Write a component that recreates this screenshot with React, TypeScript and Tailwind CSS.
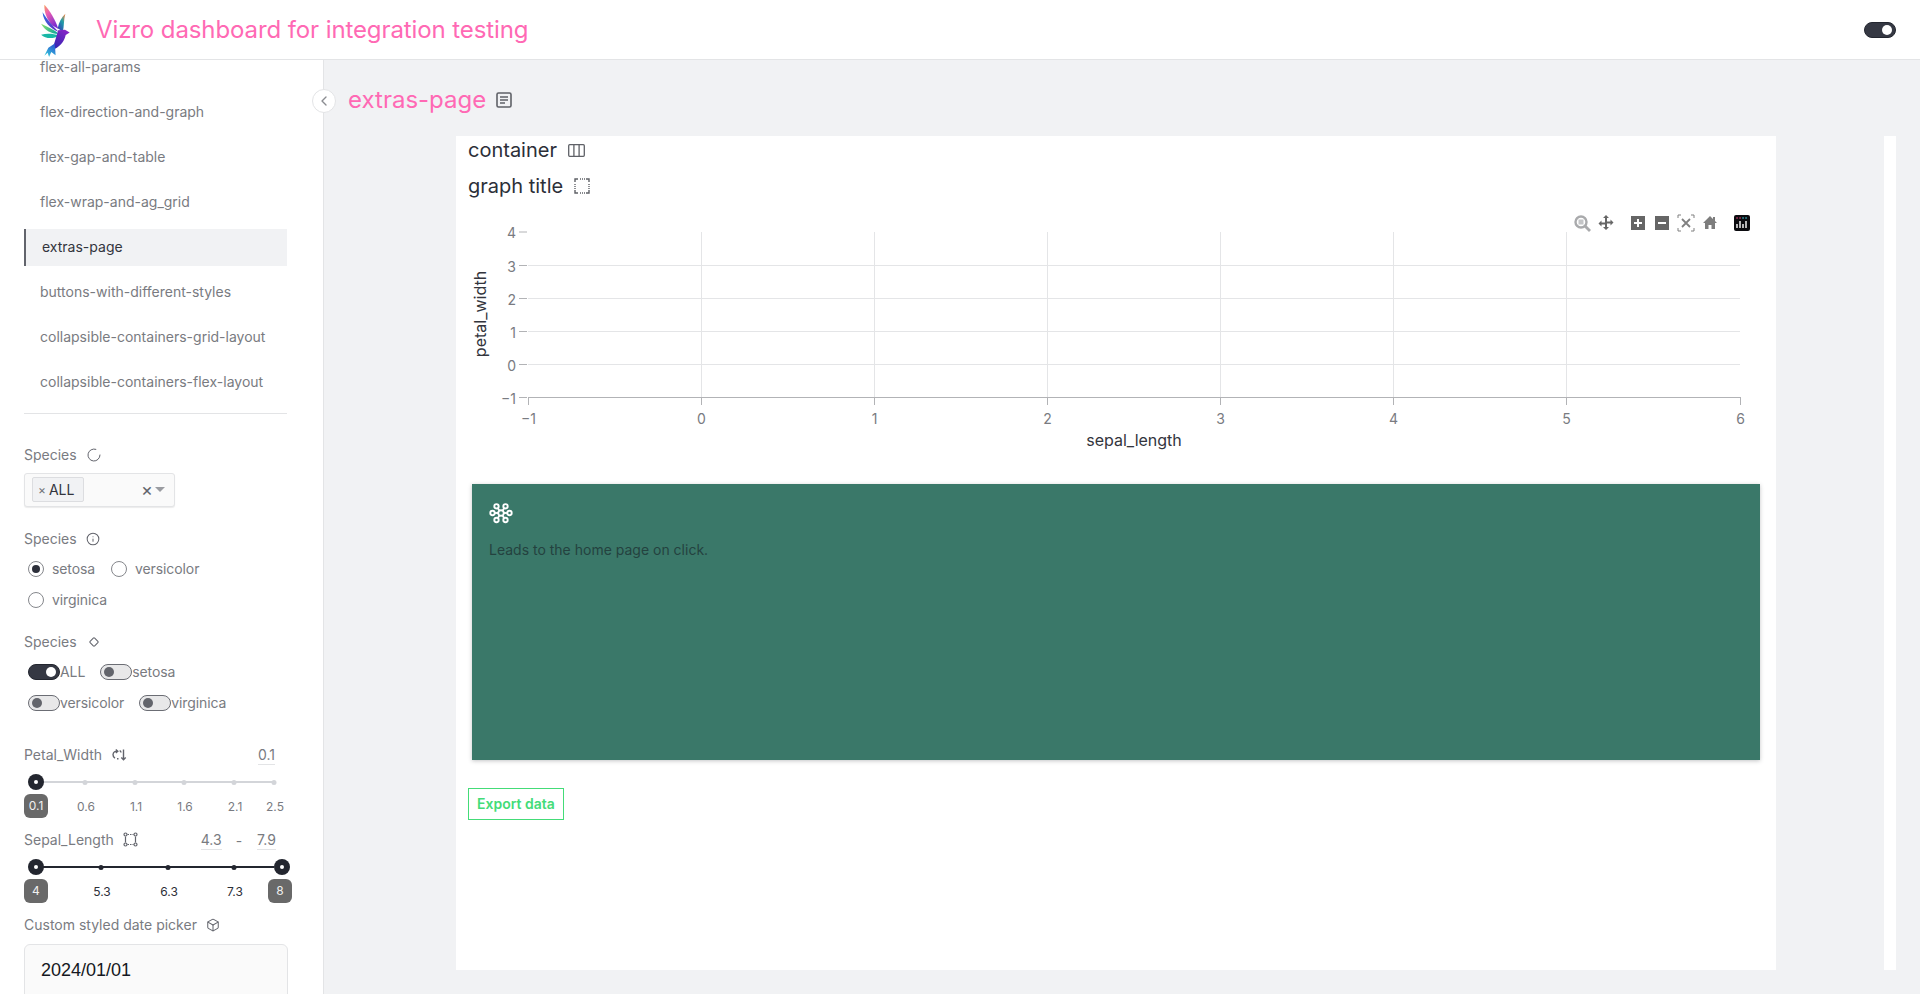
import { Box, ChevronLeft, Diamond, Info, LoaderCircle } from "lucide-react";
import type { ReactNode } from "react";

const pages = [
  "flex-all-params",
  "flex-direction-and-graph",
  "flex-gap-and-table",
  "flex-wrap-and-ag_grid",
  "extras-page",
  "buttons-with-different-styles",
  "collapsible-containers-grid-layout",
  "collapsible-containers-flex-layout",
];

function Logo() {
  return (
    <svg width="47" height="58" viewBox="10 5 130 160" className="shrink-0">
      <defs>
        <linearGradient id="wingA" x1="0" y1="0" x2="0.6" y2="1">
          <stop offset="0" stopColor="#f7a35c" />
          <stop offset="0.35" stopColor="#ef5fb0" />
          <stop offset="1" stopColor="#7a2bd0" />
        </linearGradient>
        <linearGradient id="wingB" x1="0" y1="0" x2="1" y2="1">
          <stop offset="0" stopColor="#2f6fe0" />
          <stop offset="1" stopColor="#6a25c4" />
        </linearGradient>
        <linearGradient id="wingC" x1="0" y1="0" x2="1" y2="0.5">
          <stop offset="0" stopColor="#8fe36a" />
          <stop offset="1" stopColor="#15a79a" />
        </linearGradient>
        <linearGradient id="wingR" x1="0.8" y1="0" x2="0.2" y2="1">
          <stop offset="0" stopColor="#e0884a" />
          <stop offset="0.4" stopColor="#1f9fa8" />
          <stop offset="1" stopColor="#3538b8" />
        </linearGradient>
        <linearGradient id="body" x1="0.8" y1="0" x2="0.2" y2="1">
          <stop offset="0" stopColor="#8a24c8" />
          <stop offset="1" stopColor="#2a25b0" />
        </linearGradient>
        <linearGradient id="tail" x1="0.7" y1="0" x2="0.2" y2="1">
          <stop offset="0" stopColor="#2a55d0" />
          <stop offset="1" stopColor="#35d0dc" />
        </linearGradient>
      </defs>
      <path d="M47 15C62 30 76 55 86 82L68 72C54 55 46 36 47 15Z" fill="url(#wingA)" />
      <path d="M42 36C54 56 70 74 86 90C64 82 44 62 42 36Z" fill="url(#wingB)" />
      <path d="M38 68C55 76 72 84 88 96C66 97 48 86 38 68Z" fill="url(#wingC)" />
      <path d="M38 98C55 94 72 95 88 101C72 110 50 110 38 98Z" fill="#19b7a6" />
      <path d="M105 40C100 58 102 74 98 90L84 80C87 64 94 50 105 40Z" fill="url(#wingR)" />
      <path d="M85 86L104 84L117 92L106 99C102 118 88 134 68 141C75 122 80 104 85 86Z" fill="url(#body)" />
      <path d="M76 122L78 155L66 146L60 160L56 148L47 156L58 134Z" fill="url(#tail)" />
    </svg>
  );
}

function Toggle({ on = false }: { on?: boolean }) {
  if (on) {
    return (
      <span className="flex h-4 w-8 shrink-0 items-center justify-end rounded-full border border-[#23262f] bg-[#353843] pr-[3px]">
        <span className="h-2.5 w-2.5 rounded-full bg-white" />
      </span>
    );
  }
  return (
    <span className="flex h-4 w-8 shrink-0 items-center rounded-full border border-[#6b6d74] bg-[#e8e8e9] pl-[3px]">
      <span className="h-2.5 w-2.5 rounded-full bg-[#63656c]" />
    </span>
  );
}

function Label({ text, icon }: { text: string; icon: ReactNode }) {
  return (
    <div className="flex h-5 items-center gap-[9px] text-sm text-[#797b81]">
      <span>{text}</span>
      {icon}
    </div>
  );
}

function Radio({ text, checked = false }: { text: string; checked?: boolean }) {
  return (
    <label className="flex items-center gap-2">
      <span className="flex h-4 w-4 items-center justify-center rounded-full border border-[#85878c] bg-white">
        {checked && <span className="h-2 w-2 rounded-full bg-[#2c2f3a]" />}
      </span>
      <span>{text}</span>
    </label>
  );
}

function ToggleItem({ text, on = false }: { text: string; on?: boolean }) {
  return (
    <label className="flex items-center">
      <Toggle on={on} />
      <span>{text}</span>
    </label>
  );
}

function ValueBox({ value, className }: { value: string; className: string }) {
  return (
    <span className={`translate-y-px border-b border-[#e3e4e6] text-sm leading-[18px] text-[#797b81] ${className}`}>
      {value}
    </span>
  );
}

function Thumb({ x }: { x: number }) {
  return (
    <span
      className="absolute top-[9.5px] flex h-4 w-4 -translate-x-1/2 items-center justify-center rounded-full bg-[#23262f]"
      style={{ left: x }}
    >
      <span className="h-1 w-1 rounded-full bg-white" />
    </span>
  );
}

function Bubble({ x, value }: { x: number; value: string }) {
  return (
    <span
      className="absolute top-[29px] flex h-6 w-6 -translate-x-1/2 items-center justify-center rounded-md bg-[#696969] text-xs text-[#f0f0f0]"
      style={{ left: x }}
    >
      {value}
    </span>
  );
}

function Slider({
  marks,
  dark,
  from,
  to,
}: {
  marks: { x: number; label: string; labelX: number }[];
  dark: boolean;
  from: { x: number; value: string };
  to?: { x: number; value: string };
}) {
  return (
    <div className="relative h-[53px] w-full">
      <span
        className={`absolute left-[12px] top-[16.5px] h-0.5 w-[238px] ${dark ? "bg-[#23262f]" : "bg-[#d3d5d9]"}`}
      />
      {marks.map((m) => (
        <span key={m.label}>
          <span
            className={`absolute top-[15px] h-[5px] w-[5px] -translate-x-1/2 rounded-full ${dark ? "bg-[#23262f]" : "bg-[#d3d5d9]"}`}
            style={{ left: m.x }}
          />
          <span
            className={`absolute top-[34px] -translate-x-1/2 text-xs leading-4 ${dark ? "text-[#2c2f38]" : "text-[#797b81]"}`}
            style={{ left: m.labelX }}
          >
            {m.label}
          </span>
        </span>
      ))}
      <Thumb x={12} />
      <Bubble x={12} value={from.value} />
      {to && <Thumb x={258} />}
      {to && <Bubble x={256} value={to.value} />}
    </div>
  );
}

function Sidebar() {
  return (
    <aside className="flex w-[324px] shrink-0 flex-col overflow-hidden border-r border-[#e3e4e6] bg-white">
      <div className="-mt-[15.5px] pl-6 pr-9">
        <nav className="flex flex-col">
          {pages.map((page) =>
            page === "extras-page" ? (
              <div key={page} className="flex h-[45px] items-center">
                <a className="flex h-[37px] w-full items-center border-l-2 border-[#62646c] bg-[#f1f2f4] pl-4 text-sm text-[#33353d]">
                  {page}
                </a>
              </div>
            ) : (
              <a key={page} className="flex h-[45px] items-center pl-4 text-sm text-[#797b81]">
                {page}
              </a>
            ),
          )}
        </nav>
        <hr className="mt-2 border-[#e3e4e6]" />

        <div className="mt-[31px]">
          <Label text="Species" icon={<LoaderCircle size={16} strokeWidth={1.5} className="text-[#62646c]" />} />
        </div>
        <div className="mt-2 flex h-[34px] w-[151px] items-center rounded-[3px] border border-[#e3e4e6] bg-[#fafafa] pl-[7px] pr-[9px] shadow-[0_1px_1px_rgba(0,0,0,0.08)]">
          <span className="flex h-[25px] items-center gap-[3px] rounded-[2px] border border-[#dcdde0] bg-[#f1f2f4] pl-[5px] pr-[9px] text-sm text-[#33353d]">
            <span className="text-xs text-[#72747a]">×</span>ALL
          </span>
          <span className="ml-auto text-lg leading-none text-[#62646c]">×</span>
          <span className="ml-[2px] h-0 w-0 border-x-[5px] border-t-[5px] border-x-transparent border-t-[#9a9ca1]" />
        </div>

        <div className="mt-[22px]">
          <Label text="Species" icon={<Info size={14} strokeWidth={1.75} className="text-[#62646c]" />} />
        </div>
        <div className="mt-2 flex flex-col gap-[7px] pl-1 text-sm tracking-[-0.1px] text-[#797b81]">
          <div className="flex h-6 items-center gap-4">
            <Radio text="setosa" checked />
            <Radio text="versicolor" />
          </div>
          <div className="flex h-6 items-center gap-4">
            <Radio text="virginica" />
          </div>
        </div>

        <div className="mt-5">
          <Label text="Species" icon={<Diamond size={10} strokeWidth={2.5} className="ml-[3px] text-[#62646c]" />} />
        </div>
        <div className="mt-2 flex flex-col gap-[7px] pl-1 text-sm tracking-[-0.1px] text-[#797b81]">
          <div className="flex h-6 items-center gap-[15px]">
            <ToggleItem text="ALL" on />
            <ToggleItem text="setosa" />
          </div>
          <div className="flex h-6 items-center gap-[15px]">
            <ToggleItem text="versicolor" />
            <ToggleItem text="virginica" />
          </div>
        </div>

        <div className="mt-[30px] flex h-5 items-center justify-between">
          <Label
            text="Petal_Width"
            icon={
              <svg width="16" height="14" viewBox="0 0 16 14" fill="none" stroke="#62646c" strokeWidth="1.4">
                <path d="M6.5 3.2A4 4 0 0 0 2 6.5a4 4 0 0 0 2 3.6M4.8 1.5l2 1.7-2 1.7" />
                <path d="M6 10.7h1.5M12.5 1.5v10M10.3 9.5l2.2 2.2 2.2-2.2M8.7 2.5c.8.5 1.2 1 1.3 2" />
              </svg>
            }
          />
          <ValueBox value="0.1" className="mr-[12px]" />
        </div>
        <Slider
          dark={false}
          from={{ x: 12, value: "0.1" }}
          marks={[
            { x: 61, label: "0.6", labelX: 62 },
            { x: 111, label: "1.1", labelX: 112 },
            { x: 160, label: "1.6", labelX: 161 },
            { x: 210, label: "2.1", labelX: 211 },
            { x: 250, label: "2.5", labelX: 251 },
          ]}
        />

        <div className="mt-3 flex h-5 items-center">
          <Label
            text="Sepal_Length"
            icon={
              <svg width="15" height="15" viewBox="0 0 15 15" fill="none" stroke="#62646c" strokeWidth="1.2">
                <circle cx="2.5" cy="2.5" r="1.5" />
                <circle cx="12.5" cy="2.5" r="1.5" />
                <circle cx="2.5" cy="12.5" r="1.5" />
                <circle cx="12.5" cy="12.5" r="1.5" />
                <path d="M4.5 2.500h6M4.5 12.500h6" strokeDasharray="1.5 1" />
                <path d="M2.5 4.500v6M12.5 4.500v6" />
              </svg>
            }
          />
          <ValueBox value="4.3" className="ml-[63px]" />
          <span className="ml-[14px] translate-y-px text-sm text-[#797b81]">-</span>
          <ValueBox value="7.9" className="ml-[15px]" />
        </div>
        <Slider
          dark
          from={{ x: 12, value: "4" }}
          to={{ x: 258, value: "8" }}
          marks={[
            { x: 77, label: "5.3", labelX: 78 },
            { x: 144, label: "6.3", labelX: 145 },
            { x: 210, label: "7.3", labelX: 211 },
          ]}
        />

        <div className="mt-3">
          <Label text="Custom styled date picker" icon={<Box size={14} strokeWidth={1.75} className="text-[#62646c]" />} />
        </div>
        <div className="mt-[9px] flex h-[60px] w-[264px] items-start rounded-md border border-[#e3e4e6] bg-[#fafafa] pl-4 pt-[11px] font-['Liberation_Sans',sans-serif] text-lg text-[#141721]">
          2024/01/01
        </div>
      </div>
    </aside>
  );
}

function Modebar() {
  return (
    <g>
      <g fill="none" stroke="#a9aaac">
        <circle cx="1581" cy="222" r="5.5" strokeWidth="2.4" />
        <path d="M1585 226l5 5" strokeWidth="2.8" />
      </g>
      <rect x="1578.5" y="219.5" width="5" height="5" fill="#c4c5c7" />
      <g fill="#666">
        <path d="M1606 215l3 3h-2v3.5h3.5v-2l3 3-3 3v-2H1607v3.5h2l-3 3-3-3h2V224.5h-3.5v2l-3-3 3-3v2h3.5V218h-2z" />
        <rect x="1631" y="216" width="14" height="14" />
        <rect x="1655" y="216" width="14" height="14" />
        <path d="M1703 223l7-7 3 3v-2h2v4l2 2h-2v6h-3.5v-4h-3v4H1705v-6z" fill="#7d7d7d" />
      </g>
      <path d="M1638 219v8M1634 223h8M1658 223h8" stroke="#fff" strokeWidth="2" />
      <g fill="none" stroke="#808080" strokeWidth="1">
        <path d="M1678 218v-3h3M1691 215h3v3M1694 228v3h-3M1681 231h-3v-3" />
        <path d="M1682 219l8 8M1690 219l-8 8" strokeWidth="1.8" />
      </g>
      <rect x="1734" y="215" width="16" height="16" rx="2" fill="#0b0b0f" />
      <path d="M1737 224v4M1740 221v7M1743 224v4M1746 221v7" stroke="#fff" strokeWidth="1.4" />
      <path d="M1737 218h.1M1740 218h.1" stroke="#e0457b" strokeWidth="1.6" strokeLinecap="round" />
      <path d="M1743 218h.1M1746 218h.1" stroke="#45c8d8" strokeWidth="1.6" strokeLinecap="round" />
    </g>
  );
}

function Chart() {
  const xs = [
    { v: "−1", x: 528.5 },
    { v: "0", x: 701.5 },
    { v: "1", x: 874.5 },
    { v: "2", x: 1047.5 },
    { v: "3", x: 1220.5 },
    { v: "4", x: 1393.5 },
    { v: "5", x: 1566.5 },
    { v: "6", x: 1740.5 },
  ];
  const ys = [
    { v: "4", y: 232 },
    { v: "3", y: 265.5 },
    { v: "2", y: 298.5 },
    { v: "1", y: 331.5 },
    { v: "0", y: 364.5 },
    { v: "−1", y: 397.5 },
  ];
  return (
    <svg width="1296" height="270" viewBox="468 200 1296 270" className="block">
      {xs.slice(1, 7).map((t) => (
        <line key={t.x} x1={t.x} x2={t.x} y1="232" y2="398" stroke="#e4e5e7" />
      ))}
      {ys.slice(1, 5).map((t) => (
        <line key={t.y} x1="528" x2="1740" y1={t.y} y2={t.y} stroke="#e4e5e7" />
      ))}
      <line x1="528" x2="1741" y1="397.5" y2="397.5" stroke="#b2b3b6" />
      {xs.map((t) => (
        <g key={t.v}>
          <line x1={t.x} x2={t.x} y1="398" y2="405" stroke="#b2b3b6" />
          <text x={t.x} y="424" textAnchor="middle" fontSize="14" fill="#797b81" fontFamily="Inter, sans-serif">
            {t.v}
          </text>
        </g>
      ))}
      {ys.map((t) => (
        <g key={t.y}>
          <line x1="519" x2="527" y1={t.y} y2={t.y} stroke="#b2b3b6" />
          <text x="516" y={t.y + 6} textAnchor="end" fontSize="14" fill="#797b81" fontFamily="Inter, sans-serif">
            {t.v}
          </text>
        </g>
      ))}
      <text x="1134" y="446" textAnchor="middle" fontSize="16" fill="#33353d" fontFamily="Inter, sans-serif">
        sepal_length
      </text>
      <text
        x="0"
        y="0"
        transform="translate(486 314) rotate(-90)"
        textAnchor="middle"
        fontSize="16"
        fill="#33353d"
        fontFamily="Inter, sans-serif"
      >
        petal_width
      </text>
      <Modebar />
    </svg>
  );
}

function HubIcon() {
  const rings = [
    [-4.5, -6.7],
    [4.5, -6.7],
    [-8.5, 0],
    [8.5, 0],
    [-4.5, 7],
    [4.5, 7],
  ];
  return (
    <svg width="24" height="22" viewBox="-12 -11 24 22" fill="none" stroke="#fff" strokeWidth="1.9">
      {rings.map(([x, y]) => (
        <g key={`${x}${y}`}>
          <line x1="0" y1="0" x2={x * 0.7} y2={y * 0.7} />
          <circle cx={x} cy={y} r="2.2" fill="#3a7869" />
        </g>
      ))}
      <circle r="2.8" fill="#3a7869" />
    </svg>
  );
}

function PageCard() {
  return (
    <section className="h-[834px] w-[1320px] shrink-0 overflow-hidden bg-white pl-3">
      <div className="flex h-7 items-center gap-[11px] text-xl text-[#2c2f38]">
        <span>container</span>
        <svg width="17" height="13" viewBox="0 0 17 13" fill="none" stroke="#5f6167" strokeWidth="1.3">
          <rect x="0.7" y="0.7" width="15.6" height="11.6" rx="1" />
          <path d="M5.9 1v11M11.1 1v11" />
        </svg>
      </div>
      <div className="mt-2 flex h-7 items-center gap-[11px] text-xl text-[#2c2f38]">
        <span>graph title</span>
        <svg width="16" height="16" viewBox="0 0 16 16" fill="none" stroke="#5f6167" strokeWidth="1.4">
          <path d="M1 4V1h3M12 1h3v3M15 12v3h-3M4 15H1v-3" />
          <path d="M6 1h5M6 15h5M1 6v5M15 6v5" strokeDasharray="1 1" />
        </svg>
      </div>
      <Chart />
      <div className="ml-1 mt-[14px] h-[276px] w-[1288px] bg-[#3a7869] px-[17px] pt-[18px] shadow-[0_1px_4px_rgba(20,23,33,0.25)]">
        <HubIcon />
        <p className="mt-4 text-sm text-[#24423f]">Leads to the home page on click.</p>
      </div>
      <button className="mt-7 flex h-8 w-24 items-center justify-center border border-[#44dc78] text-sm font-semibold text-[#44dc78]">
        Export data
      </button>
    </section>
  );
}

export default function App() {
  return (
    <div className="flex h-screen flex-col overflow-hidden bg-[#f1f2f4] font-['Inter',sans-serif]">
      <header className="flex h-[60px] shrink-0 items-center border-b border-[#e3e4e6] bg-white pl-[31px] pr-[24px]">
        <Logo />
        <h1 className="ml-[18px] text-2xl tracking-[-0.1px] text-[#ff69b4]">Vizro dashboard for integration testing</h1>
        <div className="ml-auto">
          <Toggle on />
        </div>
      </header>
      <div className="relative flex min-h-0 flex-1">
        <Sidebar />
        <button className="absolute left-[312px] top-[29px] flex h-6 w-6 items-center justify-center rounded-full border border-[#e3e4e6] bg-white text-[#8a8c91]">
          <ChevronLeft size={16} />
        </button>
        <main className="min-w-0 flex-1">
          <div className="flex h-[76px] items-center gap-[10px] pl-6 pt-[4px]">
            <h2 className="text-2xl text-[#ff69b4]">extras-page</h2>
            <svg width="16" height="16" viewBox="0 0 16 16" fill="none" stroke="#5f6167" strokeWidth="1.6">
              <rect x="1" y="1" width="14" height="14" rx="1.5" />
              <path d="M4 5h8M4 8h8M4 11h5" />
            </svg>
          </div>
          <div className="flex items-start pl-[132px]">
            <PageCard />
            <div className="ml-[108px] h-[834px] w-3 bg-white" />
          </div>
        </main>
      </div>
    </div>
  );
}
